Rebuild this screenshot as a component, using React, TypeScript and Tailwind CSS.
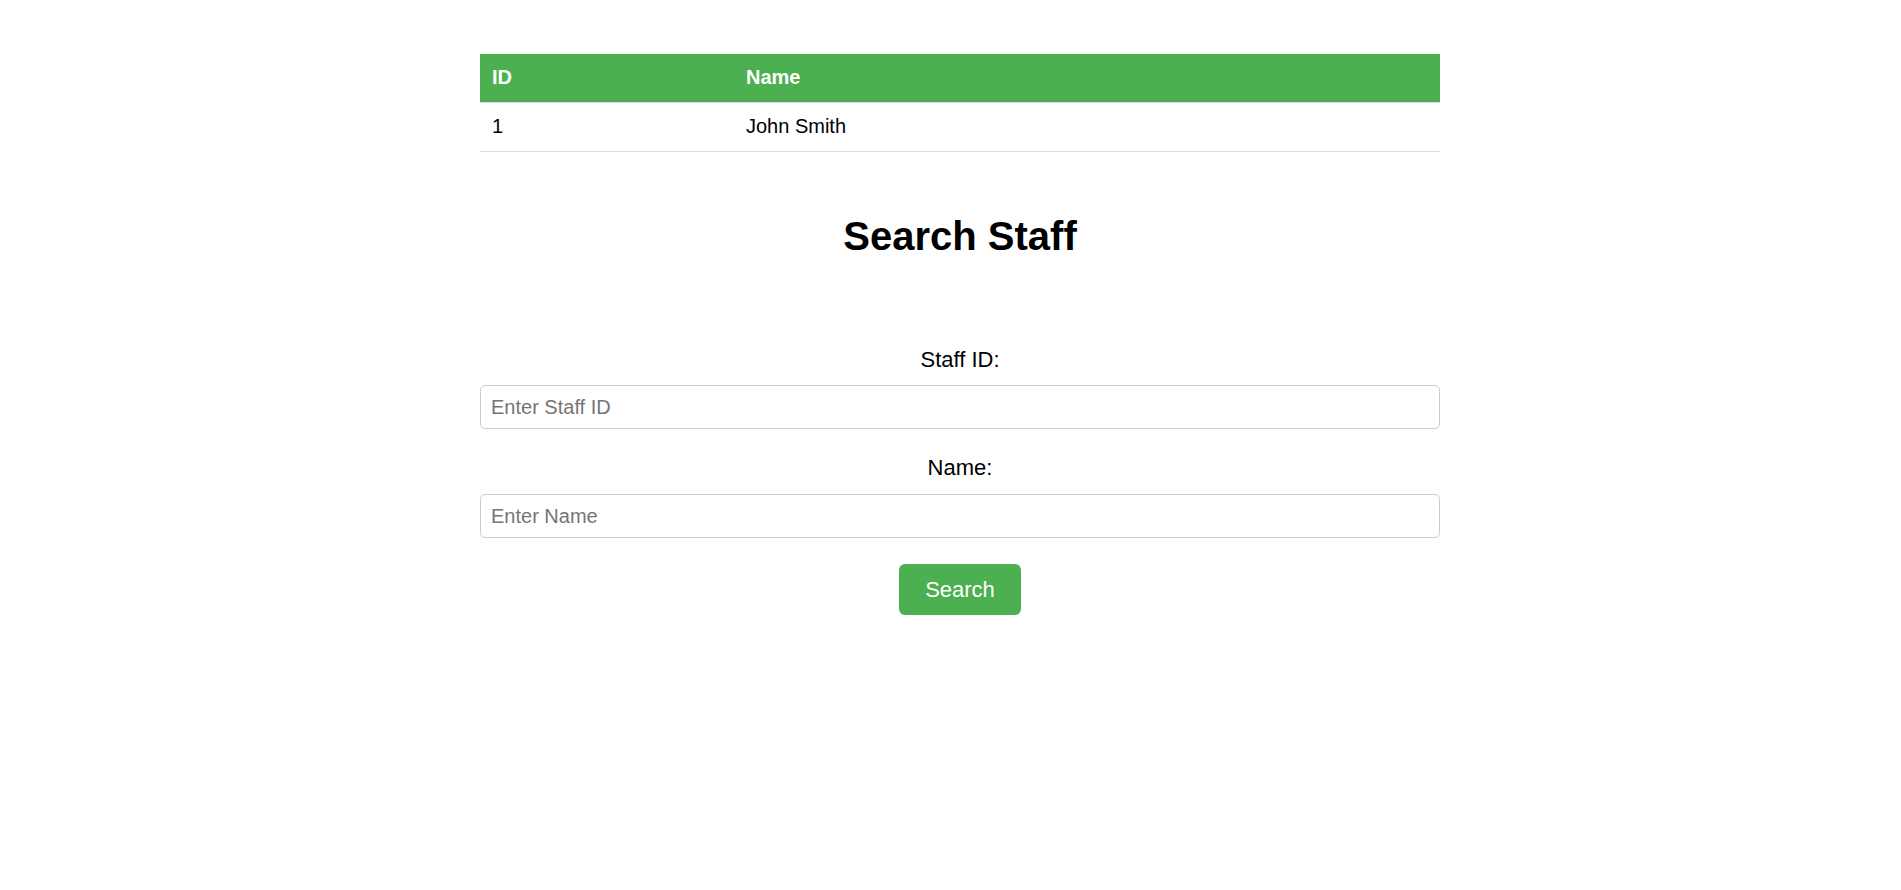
import { useState } from "react";

type Staff = { id: number; name: string };

const staff: Staff[] = [{ id: 1, name: "John Smith" }];

export default function App() {
  const [staffId, setStaffId] = useState("");
  const [name, setName] = useState("");

  return (
    <main className="min-h-screen bg-white font-['Liberation_Sans',Arial,sans-serif] text-black">
      <div className="ml-[480px] w-[960px] pt-[54px]">
        <table className="w-full border-collapse text-[20px]">
          <thead>
            <tr className="bg-[#4caf50] text-white">
              <th className="w-[254px] border-b border-[#dddddd] px-3 pt-[11px] pb-[13px] text-left font-bold leading-6">ID</th>
              <th className="border-b border-[#dddddd] px-3 pt-[11px] pb-[13px] text-left font-bold leading-6">Name</th>
            </tr>
          </thead>
          <tbody>
            {staff.map((s) => (
              <tr key={s.id}>
                <td className="border-b border-[#dddddd] px-3 pt-[11px] pb-[13px] leading-6">{s.id}</td>
                <td className="border-b border-[#dddddd] px-3 pt-[11px] pb-[13px] leading-6">{s.name}</td>
              </tr>
            ))}
          </tbody>
        </table>

        <h2 className="mt-[61px] text-center text-[40px] font-bold leading-[46px]">Search Staff</h2>

        <form className="mt-[88px] flex flex-col items-center" onSubmit={(e) => e.preventDefault()}>
          <label htmlFor="staffId" className="text-[22px] leading-[25px]">
            Staff ID:
          </label>
          <input
            id="staffId"
            value={staffId}
            onChange={(e) => setStaffId(e.target.value)}
            placeholder="Enter Staff ID"
            className="mt-[13px] h-[44px] w-full rounded-[5px] border border-[#cccccc] px-[10px] text-[20px] outline-none placeholder:text-[#757575]"
          />

          <label htmlFor="staffName" className="mt-[26px] text-[22px] leading-[25px]">
            Name:
          </label>
          <input
            id="staffName"
            value={name}
            onChange={(e) => setName(e.target.value)}
            placeholder="Enter Name"
            className="mt-[14px] h-[44px] w-full rounded-[5px] border border-[#cccccc] px-[10px] text-[20px] outline-none placeholder:text-[#757575]"
          />

          <button
            type="submit"
            className="mt-[26px] h-[51px] w-[122px] rounded-[6px] bg-[#4caf50] text-[22px] text-white"
          >
            Search
          </button>
        </form>
      </div>
    </main>
  );
}
